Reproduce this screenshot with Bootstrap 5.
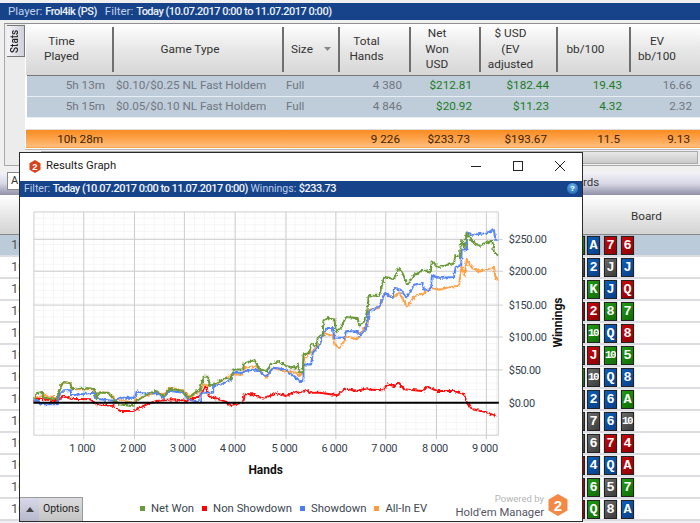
<!DOCTYPE html>
<html lang="en"><head><meta charset="utf-8"><title>Results Graph</title>
<link href="https://cdn.jsdelivr.net/npm/bootstrap@5.3.0/dist/css/bootstrap.min.css" rel="stylesheet">
<script src="https://cdn.jsdelivr.net/npm/bootstrap@5.3.0/dist/js/bootstrap.bundle.min.js"></script>
<style>
html,body{width:700px;height:523px;overflow:hidden;margin:0}
body{background:#f0f0f0;font-family:Roboto,sans-serif;font-size:12px;color:#333;position:relative;line-height:1.2}
.hdr-bar{margin-top:3px;height:17px;background:#16438a;color:#c3d2ea;padding-left:8px;font-size:11.5px;line-height:17px;white-space:nowrap}
.hdr-bar b{font-weight:500;color:#edf2fa;font-size:11px;letter-spacing:-.5px}
.hdr-bar span{margin-right:8px}
.stats-panel{margin:3px 0 0 4px;height:143px;border:1px solid #a9a9a9;border-right:0;background:#ececec;border-top-color:#8f8f8f}
.stats-tab{width:18px;height:32px;margin:1px 0 0 2px;border:1px solid #777;border-right:0;background:linear-gradient(270deg,#f4f4f8,#cfcfdc);writing-mode:vertical-rl;transform:rotate(180deg);text-align:center;font-size:10px;font-weight:500;line-height:16px;color:#222}
.stats-body{flex:1;background:#fff;position:relative;overflow:hidden}
.stat-tbl{table-layout:fixed;width:674px;margin:0;border-collapse:collapse;--bs-table-bg:transparent;font-size:11.7px}
.stat-tbl>*>tr>*{padding:0;border:0;white-space:nowrap;vertical-align:middle;box-shadow:none}
.stat-tbl thead th{height:51px;font-weight:400;text-align:center;line-height:15.5px;color:#333;white-space:normal;background:linear-gradient(#fff,#e9e9e9 45%,#d6d6d6);border-bottom:1px solid #777;position:relative;font-size:11.8px;padding-right:16px}
.stat-tbl thead th+th::before{content:"";position:absolute;left:-1px;top:3px;bottom:3px;width:1.5px;background:#6f6f6f}
.stat-tbl thead th.ps-2{padding-right:0}
.stat-tbl .num{text-align:right;padding-right:8px}
.stat-tbl tbody .txt{padding-left:3px}
.rw-a td{height:21px;background:#bfccd9;color:#6f7780;border-bottom:1px solid #e6edf3!important}
.rw-a td:first-child{border-left:2px solid #fff!important}
.gn{color:#1b7c22!important}
.rw-sp td{height:12px;border-bottom:1px solid #ddd!important}
.rw-tot td{height:19px;background:linear-gradient(#f98a1e,#fda54f 55%,#ffbf80);color:#3d2300}
.rw-tot .num{padding-right:10px}
.sbar{height:17px;background:#eee;border-top:1px solid #b5b5b5;border-bottom:1px solid #999;margin-top:1px}
.sbar i{display:block;height:13px;margin:1px 2px 0 16px;background:linear-gradient(#e8e8e8,#c9c9c9);border:1px solid #aaa}
.tab-row{margin-top:6px;height:23px;display:flex;background:linear-gradient(#f3f3f8,#d8d8e6 50%,#8f8fa8)}
.tab-a{margin-left:7px;width:14px;height:18px;background:#fff;border:1px solid #888;font-size:11px;padding-left:3px;line-height:16px;overflow:hidden}
.tab-c{margin-left:562px;line-height:20px;font-size:11.5px}
.grid-head{height:40px;padding-top:3px;background:linear-gradient(#fff,#e8e8e8 50%,#d3d3d3);border-bottom:1px solid #888;display:flex;align-items:center;font-size:11.7px}
.grid-head span{margin-left:631px}
.g-row{height:22px;display:flex;align-items:center;background:#fff;border-bottom:2px solid #dcdde2;white-space:nowrap;color:#555;font-size:13px;overflow:hidden}
.g-row.sel{background:#bccbda}
.g-row .dt{width:572px;padding-left:11px;flex:none}
.cd{width:13px;height:19px;flex:none;margin-right:4px;border:1px solid #222;color:#fff;font:700 13.5px/17px "Liberation Mono",monospace;text-align:center;box-shadow:0 0 1px #777;overflow:hidden}
.cd.x{font-size:11px;letter-spacing:-1.5px;text-indent:-1px}
.cd.p{margin-right:2px}
.c-b{background:linear-gradient(135deg,#0c5fb8,#0b3f86)}
.c-r{background:linear-gradient(135deg,#c8070b,#8b0205)}
.c-g{background:linear-gradient(135deg,#1e9a12,#126c08)}
.c-d{background:linear-gradient(135deg,#6a6a6a,#3c3c3c)}
.graph-win{position:absolute;left:19px;top:152px;width:564px;height:370px;background:#fff;border:1.5px solid #2a2a2a;display:flex;flex-direction:column}
.win-title{height:28px;display:flex;align-items:center;font-size:11.3px;color:#222;padding-left:9px;flex:none;padding-bottom:2px}
.win-title svg.ico{margin-right:5px}
.win-title .ctl{margin-left:auto;display:flex;align-items:center;gap:32px;padding-right:17px}
.win-filter{height:16px;background:#16438a;color:#bccde8;font-size:10.5px;line-height:15px;padding-left:4px;flex:none;position:relative;white-space:nowrap}
.win-filter b{color:#f2f5fb;font-weight:500;font-size:11px;letter-spacing:-.5px}
.hlp{position:absolute;right:4px;top:2px;width:11px;height:11px;border-radius:50%;background:radial-gradient(circle at 50% 30%,#6db1e8,#0f5fa8);color:#fff;font:700 8px/11px "Liberation Sans",sans-serif;text-align:center}
.chart{flex:1;min-height:0;display:block}
.chart text{font-family:Roboto,sans-serif;font-size:11px;letter-spacing:-.3px;fill:#33404d}
.chart .ttl{font-weight:700;fill:#111;font-size:12px;letter-spacing:0}
.win-foot{height:25px;flex:none;display:flex;align-items:flex-end;position:relative;font-size:11.3px;color:#444}
.opt-btn{width:63px;height:24px;display:flex;border:1px solid #9a9a9a;border-bottom:0;border-left:0;background:linear-gradient(#dcdce0,#c4c4c4);font-size:10.5px;color:#222;align-items:center}
.opt-btn i{width:19px;height:100%;display:flex;align-items:center;justify-content:center;background:linear-gradient(#d8d8ea,#b8b8cc);margin-right:4px}
.lgd{display:flex;align-items:center;margin-left:57px;height:24px;color:#3a4650}
.lgd u{display:inline-block;width:5px;height:5px;margin-right:6px}
.lgd span{margin-right:8px;display:flex;align-items:center}
.pw{position:absolute;right:38px;bottom:0;text-align:right;line-height:11px;color:#556}
.pw small{display:block;color:#b5b5b5;font-size:9.5px;margin-bottom:1px}
.pw div{font-size:11.3px;line-height:15px;margin-bottom:1px}
.hex{position:absolute;right:14px;bottom:5px}
</style></head><body>
<div class="hdr-bar"><span>Player: <b>Frol4ik (PS)</b></span><span>Filter: <b>Today (10.07.2017 0:00 to 11.07.2017 0:00)</b></span></div>
<div class="stats-panel d-flex">
<div class="stats-tab">Stats</div>
<div class="stats-body">
<table class="table stat-tbl">
<colgroup><col style="width:87px"><col style="width:170px"><col style="width:56px"><col style="width:71px"><col style="width:70px"><col style="width:77px"><col style="width:73px"><col style="width:70px"></colgroup>
<thead><tr><th>Time<br>Played</th><th>Game Type</th><th class="text-start ps-2">Size <svg width="8" height="5" class="ms-2" viewBox="0 0 8 5"><path d="M0 0h7L3.500 4z" fill="#888"/></svg></th><th>Total<br>Hands</th><th>Net<br>Won<br>USD</th><th>$ USD<br>(EV<br>adjusted</th><th>bb/100</th><th>EV<br>bb/100</th></tr></thead>
<tbody>
<tr class="rw-a"><td class="num">5h 13m</td><td class="txt">$0.10/$0.25 NL Fast Holdem</td><td class="txt">Full</td><td class="num">4 380</td><td class="num gn">$212.81</td><td class="num gn">$182.44</td><td class="num gn">19.43</td><td class="num">16.66</td></tr>
<tr class="rw-a"><td class="num">5h 15m</td><td class="txt">$0.05/$0.10 NL Fast Holdem</td><td class="txt">Full</td><td class="num">4 846</td><td class="num gn">$20.92</td><td class="num gn">$11.23</td><td class="num gn">4.32</td><td class="num">2.32</td></tr>
<tr class="rw-sp"><td colspan="8"></td></tr>
<tr class="rw-tot"><td class="num">10h 28m</td><td></td><td></td><td class="num">9 226</td><td class="num">$233.73</td><td class="num">$193.67</td><td class="num">11.5</td><td class="num">9.13</td></tr>
</tbody></table>
<div class="sbar"><i></i></div>
</div></div>
<div class="tab-row"><div class="tab-a">A</div><div class="tab-c">rds</div></div>
<div class="grid-head"><span>Board</span></div>
<div class="g-row sel"><div class="dt">10</div><div class="cd p c-g">9</div><div class="cd c-b">A</div><div class="cd c-r">7</div><div class="cd c-r">6</div></div>
<div class="g-row"><div class="dt">10</div><div class="cd p c-d">9</div><div class="cd c-b">2</div><div class="cd c-d">J</div><div class="cd c-b">J</div></div>
<div class="g-row"><div class="dt">10</div><div class="cd p c-d">9</div><div class="cd c-g">K</div><div class="cd c-b">J</div><div class="cd c-r">Q</div></div>
<div class="g-row"><div class="dt">10</div><div class="cd p c-r">9</div><div class="cd c-r">2</div><div class="cd c-g">8</div><div class="cd c-g">7</div></div>
<div class="g-row"><div class="dt">10</div><div class="cd p c-d">9</div><div class="cd x c-g">10</div><div class="cd c-b">Q</div><div class="cd c-r">8</div></div>
<div class="g-row"><div class="dt">10</div><div class="cd p c-d">9</div><div class="cd c-r">J</div><div class="cd x c-g">10</div><div class="cd c-g">5</div></div>
<div class="g-row"><div class="dt">10</div><div class="cd p c-g">9</div><div class="cd x c-d">10</div><div class="cd c-b">Q</div><div class="cd c-b">8</div></div>
<div class="g-row"><div class="dt">10</div><div class="cd p c-d">9</div><div class="cd c-b">2</div><div class="cd c-b">6</div><div class="cd c-g">A</div></div>
<div class="g-row"><div class="dt">10</div><div class="cd p c-d">9</div><div class="cd c-d">7</div><div class="cd c-b">6</div><div class="cd x c-d">10</div></div>
<div class="g-row"><div class="dt">10</div><div class="cd p c-d">9</div><div class="cd c-d">6</div><div class="cd c-r">7</div><div class="cd c-r">4</div></div>
<div class="g-row"><div class="dt">10</div><div class="cd p c-r">9</div><div class="cd c-b">4</div><div class="cd c-b">Q</div><div class="cd c-r">A</div></div>
<div class="g-row"><div class="dt">10</div><div class="cd p c-r">9</div><div class="cd c-g">6</div><div class="cd c-d">5</div><div class="cd c-g">7</div></div>
<div class="g-row"><div class="dt">10</div><div class="cd p c-r">9</div><div class="cd c-g">Q</div><div class="cd c-d">8</div><div class="cd c-b">A</div></div>

<section class="graph-win">
<div class="win-title"><svg class="ico" width="12" height="13" viewBox="0 0 12 13"><path d="M6 0l5.500 3.200v6.600L6 13 .5 9.800V3.200z" fill="#d8431b"/><text x="6" y="10" text-anchor="middle" fill="#fff" font-family="Liberation Sans" font-weight="700" font-size="9.500">2</text></svg>Results Graph
<div class="ctl"><svg width="10" height="10" viewBox="0 0 10 10"><path d="M0 5.500h10" stroke="#222"/></svg><svg width="10" height="10" viewBox="0 0 10 10"><rect x=".5" y=".5" width="9" height="9" fill="none" stroke="#222"/></svg><svg width="10" height="10" viewBox="0 0 10 10"><path d="M0 0l10 10M10 0L0 10" stroke="#222"/></svg></div></div>
<div class="win-filter">Filter: <b>Today (10.07.2017 0:00 to 11.07.2017 0:00)</b> Winnings: <b>$233.73</b><div class="hlp">?</div></div>
<svg class="chart" width="561" height="300" viewBox="20.500 197 561 300">
<defs>
<pattern id="mn" x="33.500" y="212" width="10.100" height="6.620" patternUnits="userSpaceOnUse"><path d="M10.100 0V6.620M0 6.620H10.100" stroke="#ececec" stroke-width="1"/></pattern>
<filter id="jag" x="-2%" y="-5%" width="104%" height="110%"><feTurbulence type="fractalNoise" baseFrequency=".12" numOctaves="2" seed="4"/><feDisplacementMap in="SourceGraphic" scale="12" xChannelSelector="R" yChannelSelector="G"/></filter>
</defs>
<rect x="33.500" y="212" width="466" height="224" fill="url(#mn)"/>
<g stroke="#cdcdcd" stroke-width="1" fill="none">
<path d="M33.500 212V436M83.500 212V440M134.500 212V440M184.500 212V440M235.500 212V440M286.500 212V440M336.500 212V440M386.500 212V440M437.500 212V440M487.500 212V440M499.500 212V436"/>
<path d="M33.500 212H499.500M33.500 239.500H504M33.500 271.500H504M33.500 305.500H504M33.500 337.500H504M33.500 370.500H504M33.500 436H499.500"/>
</g>
<g transform="translate(0 190) scale(.33333)" fill="none" stroke-width="6" stroke-linejoin="round" filter="url(#jag)">
<polyline stroke="#ffa24a" points="100,628 130,618 170,625 178,598 190,578 210,582 215,600 280,600 285,625 300,608 325,612 345,630 400,640 410,630 440,618 470,610 490,615 510,595 550,603 570,625 600,605 612,585 630,590 665,575 695,555 730,555 735,535 770,530 800,565 820,535 860,545 890,550 900,560 910,550 912,510 935,490 960,465 975,430 1000,440 1005,465 1020,475 1035,455 1040,440 1075,450 1090,420 1105,405 1110,360 1140,355 1158,310 1180,325 1200,310 1225,352 1245,320 1275,310 1296,295 1320,300 1365,290 1380,288 1388,230 1397,260 1403,210 1420,235 1440,245 1480,235 1485,228 1490,265 1498,272"/>
<polyline stroke="#ff0a0a" points="100,635 110,628 130,630 170,635 190,620 210,628 270,630 290,645 340,650 360,665 400,665 440,645 470,635 520,630 560,635 600,620 618,592 628,620 680,638 690,648 730,640 735,615 760,615 790,628 830,612 860,620 890,605 900,612 920,602 935,610 960,610 1015,618 1035,598 1075,605 1090,600 1150,603 1165,585 1185,590 1198,578 1215,600 1270,605 1285,592 1315,605 1370,605 1395,615 1405,642 1420,660 1460,668 1490,680"/>
<polyline stroke="#5585f8" points="100,628 125,645 170,645 178,615 190,603 210,603 215,618 280,610 285,628 345,635 360,625 405,625 410,605 420,612 470,612 490,625 510,605 550,610 565,630 600,640 605,610 640,610 640,590 665,585 695,570 700,550 730,550 735,545 770,540 800,560 820,535 860,540 880,560 900,575 912,575 912,525 935,525 940,490 960,470 972,430 985,415 1000,415 1005,445 1035,445 1040,425 1075,425 1080,440 1100,418 1110,365 1140,350 1158,310 1180,325 1185,295 1205,300 1222,325 1245,285 1270,280 1275,300 1296,300 1298,258 1320,265 1365,262 1370,232 1387,225 1388,180 1403,178 1405,128 1420,135 1460,130 1485,120 1490,150 1498,150"/>
<polyline stroke="#6b9a38" points="100,630 108,612 125,608 130,625 170,630 178,600 188,578 210,582 215,600 240,595 250,600 262,596 285,600 290,630 298,610 325,610 340,630 355,645 395,650 410,635 440,615 470,605 490,620 508,598 550,605 565,625 600,600 612,562 625,562 630,590 660,575 680,565 695,570 700,540 730,540 733,522 765,512 780,540 800,545 815,525 835,515 860,530 890,535 895,525 900,550 910,548 912,495 930,490 935,462 950,470 955,445 970,435 972,395 985,385 1005,390 1010,425 1025,415 1040,382 1075,385 1080,410 1095,395 1105,360 1108,318 1140,318 1155,262 1185,268 1198,235 1210,250 1225,285 1245,255 1275,240 1295,250 1298,215 1320,232 1365,220 1370,195 1382,205 1387,150 1397,175 1403,128 1420,155 1440,168 1480,152 1485,185 1498,197"/>
</g>
<path d="M33 403.500H500" stroke="#000" stroke-width="2"/>
<g text-anchor="start"><text x="510" y="243.500">$250.00</text><text x="510" y="275.500">$200.00</text><text x="510" y="309">$150.00</text><text x="510" y="341.500">$100.00</text><text x="510" y="374.500">$50.00</text><text x="510" y="408">$0.00</text></g>
<g text-anchor="middle"><text x="82" y="453">1 000</text><text x="133" y="453">2 000</text><text x="183" y="453">3 000</text><text x="233" y="453">4 000</text><text x="285" y="453">5 000</text><text x="335" y="453">6 000</text><text x="385" y="453">7 000</text><text x="436" y="453">8 000</text><text x="486" y="453">9 000</text><text class="ttl" x="266" y="475">Hands</text></g>
<text class="ttl" text-anchor="middle" transform="translate(563 323) rotate(-90)">Winnings</text>
</svg>
<div class="win-foot">
<div class="opt-btn"><i><svg width="8" height="5" viewBox="0 0 8 5"><path d="M0 5h8L4 0z" fill="#444"/></svg></i>Options</div>
<div class="lgd"><span><u style="background:#6b9a38"></u>Net Won</span><span><u style="background:#f00"></u>Non Showdown</span><span><u style="background:#4a7df5"></u>Showdown</span><span><u style="background:#ff9a3c"></u>All-In EV</span></div>
<div class="pw"><small>Powered by</small><div>Hold'em Manager</div></div>
<svg class="hex" width="20" height="22" viewBox="0 0 20 22"><path d="M10 0l9.500 5.500v11L10 22 .5 16.500v-11z" fill="#f28a45"/><text x="10" y="16.500" text-anchor="middle" fill="#fff" font-family="Liberation Sans" font-weight="700" font-size="15">2</text></svg>
</div>
</section>
</body></html>
